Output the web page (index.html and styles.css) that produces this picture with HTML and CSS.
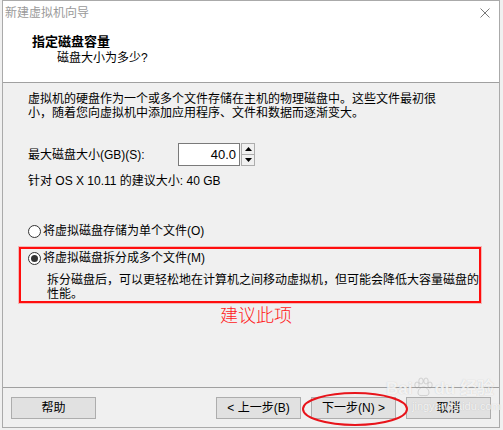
FILE: index.html
```html
<!DOCTYPE html>
<html lang="zh-CN">
<head>
<meta charset="utf-8">
<title>新建虚拟机向导</title>
<link rel="stylesheet" href="styles.css">
</head>
<body>
<div class="window">
  <div class="titlebar">
    <span class="title">新建虚拟机向导</span>
    <svg class="close" width="10" height="10" viewBox="0 0 10 10"><path d="M0.5 0.5L9.5 9.5M9.5 0.5L0.5 9.5" stroke="#7a7a7a" stroke-width="1" fill="none"/></svg>
  </div>
  <div class="header">
    <div class="h-title">指定磁盘容量</div>
    <div class="h-sub">磁盘大小为多少?</div>
  </div>
  <div class="content">
    <p class="intro">虚拟机的硬盘作为一个或多个文件存储在主机的物理磁盘中。这些文件最初很<br>小，随着您向虚拟机中添加应用程序、文件和数据而逐渐变大。</p>
    <div class="size-row">
      <span class="label">最大磁盘大小(GB)(S):</span>
      <div class="spin">
        <div class="spin-field">40.0</div>
        <div class="spin-btns">
          <div class="spin-btn"><svg width="7" height="4" viewBox="0 0 7 4"><path d="M0 4L3.5 0L7 4Z" fill="#000"/></svg></div>
          <div class="spin-btn"><svg width="7" height="4" viewBox="0 0 7 4"><path d="M0 0L3.5 4L7 0Z" fill="#000"/></svg></div>
        </div>
      </div>
    </div>
    <p class="recommend">针对 OS X 10.11 的建议大小: 40 GB</p>
    <div class="radio"><span class="dot"></span><span>将虚拟磁盘存储为单个文件(O)</span></div>
    <div class="highlight">
      <div class="radio checked"><span class="dot"></span><span>将虚拟磁盘拆分成多个文件(M)</span></div>
      <p class="desc">拆分磁盘后，可以更轻松地在计算机之间移动虚拟机，但可能会降低大容量磁盘的<br>性能。</p>
    </div>
    <div class="note">建议此项</div>
  </div>
  <div class="footer">
    <button class="btn">帮助</button>
    <div class="nav">
      <button class="btn">&lt; 上一步(B)</button>
      <button class="btn">下一步(N) &gt;</button>
      <button class="btn">取消</button>
    </div>
  </div>
  <div class="watermark">
    <div class="wm-top">Bai<svg class="paw" width="20" height="20" viewBox="0 0 20 20"><g fill="none" stroke="rgba(150,150,150,0.35)" stroke-width="1"><ellipse cx="4" cy="8" rx="2.2" ry="3"/><ellipse cx="8" cy="4" rx="2.2" ry="3"/><ellipse cx="13" cy="4" rx="2.2" ry="3"/><ellipse cx="17" cy="8" rx="2.2" ry="3"/><path d="M5 16c0-4 3-6 5.5-6s5.5 2 5.5 6c0 2-2 3-5.5 2.5C7 19 5 18 5 16z"/></g></svg>du 经验</div>
    <div class="wm-url">jingyan.baidu.com</div>
  </div>
  <svg class="ring" width="108" height="36" viewBox="0 0 108 36"><ellipse cx="54" cy="18" rx="52" ry="16" fill="none" stroke="#e8141b" stroke-width="2"/></svg>
</div>
</body>
</html>
```
FILE: styles.css
```css
* { box-sizing: border-box; }
html, body { margin: 0; padding: 0; }
body {
  background: #f0f0f0;
  width: 503px;
  height: 430px;
  overflow: hidden;
  font-family: "Liberation Sans", "Noto Sans CJK SC", "Microsoft YaHei", sans-serif;
  font-size: 12px;
  color: #000;
}
.window {
  position: relative;
  margin-left: 2px;
  width: 498px;
  height: 428px;
  border: 1px solid #aaaaaa;
  background: #f0f0f0;
  display: flex;
  flex-direction: column;
}
.titlebar {
  height: 24px;
  background: #fff;
  display: flex;
  align-items: center;
  justify-content: space-between;
  padding: 0 9px 0 2px;
}
.title { color: #9a9a9a; line-height: 24px; }
.close { display: block; }
.header {
  background: #fff;
  height: 58px;
  padding: 9px 0 0 29px;
  border-bottom: 1px solid #a0a0a0;
}
.h-title { font-weight: bold; font-size: 13px; line-height: 16px; }
.h-sub { line-height: 16px; margin-left: 25px; }
.content { flex: 1; padding: 9px 0 0 25px; }
.intro { margin: 0; line-height: 14px; }
.size-row { display: flex; align-items: center; margin-top: 23px; height: 23px; }
.label { width: 150px; line-height: 16px; }
.spin { display: flex; height: 23px; }
.spin-field {
  width: 62px;
  height: 23px;
  border: 1px solid #7a7a7a;
  background: #fff;
  text-align: right;
  padding-right: 3px;
  line-height: 21px;
  font-size: 13px;
}
.spin-btns { display: flex; flex-direction: column; width: 14px; margin-left: 1px; }
.spin-btn {
  flex: 1;
  border: 1px solid #adadad;
  background: #f0f0f0;
  display: flex;
  align-items: center;
  justify-content: center;
}
.spin-btn + .spin-btn { border-top: none; }
.spin-btn svg { display: block; }
.recommend { margin: 8px 0 0; line-height: 14px; }
.radio { display: flex; align-items: center; line-height: 16px; margin-top: 35px; }
.dot {
  width: 13px;
  height: 13px;
  border: 1px solid #333;
  border-radius: 50%;
  background: #fff;
  margin-right: 2px;
  display: flex;
  align-items: center;
  justify-content: center;
}
.checked .dot::after {
  content: "";
  width: 7px;
  height: 7px;
  border-radius: 50%;
  background: #333;
}
.highlight {
  width: 462px;
  margin: 8px 0 0 -9px;
  padding: 1px 0 0 7px;
  border: 2px solid #ff0d0d;
  box-shadow: 0 0 0 1px rgba(255, 80, 80, 0.35);
}
.highlight .radio { margin-top: 0; }
.desc { margin: 7px 0 0 19px; line-height: 14px; }
.note {
  margin: 1px 0 0 192px;
  font-family: "Noto Sans CJK SC", sans-serif;
  font-size: 18px;
  line-height: 20px;
  color: #ff1a1a;
  font-weight: 300;
}
.footer {
  height: 40px;
  border-top: 1px solid #a0a0a0;
  padding: 9px 8px 0 8px;
  display: flex;
  justify-content: space-between;
  align-items: flex-start;
}
.nav { display: flex; gap: 10px; }
.btn {
  width: 85px;
  height: 22px;
  border: 1px solid #adadad;
  background: #e1e1e1;
  font-family: inherit;
  font-size: 12px;
  color: #000;
  padding: 0;
  line-height: 20px;
}
.watermark {
  position: absolute;
  left: 383px;
  top: 376px;
  color: rgba(255, 255, 255, 0.8);
  text-shadow: 0 0 1px rgba(140, 140, 140, 0.45);
  font-family: "Liberation Sans", "Noto Sans CJK SC", sans-serif;
  pointer-events: none;
}
.wm-top { display: flex; align-items: flex-end; font-size: 17px; font-weight: bold; line-height: 22px; }
.paw { display: block; margin: 0 1px 3px; }
.wm-url { font-size: 11px; line-height: 12px; margin-left: 26px; }
.ring {
  position: absolute;
  left: 298px;
  top: 390px;
}
```
